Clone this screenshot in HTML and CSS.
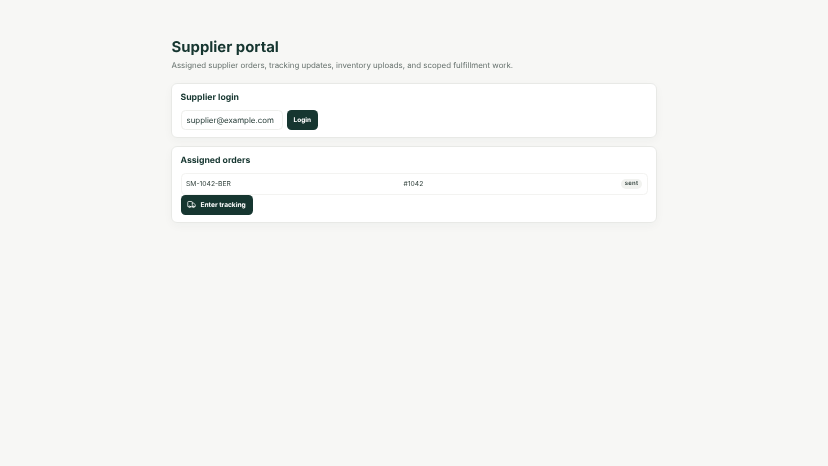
FILE: index.html
```html
<!DOCTYPE html>
<html lang="en">
<head>
<meta charset="utf-8">
<title>Supplier portal</title>
<link rel="stylesheet" href="styles.css">
</head>
<body>
<main class="page">
  <header class="head">
    <h1>Supplier portal</h1>
    <p>Assigned supplier orders, tracking updates, inventory uploads, and scoped fulfillment work.</p>
  </header>
  <section class="card">
    <h2>Supplier login</h2>
    <form class="login">
      <input class="field" type="text" value="supplier@example.com">
      <button class="btn" type="button">Login</button>
    </form>
  </section>
  <section class="card">
    <h2>Assigned orders</h2>
    <div class="row">
      <span>SM-1042-BER</span>
      <span>#1042</span>
      <span class="pill">sent</span>
    </div>
    <button class="btn btn-icon" type="button">
      <svg viewBox="0 0 24 24" width="9" height="9" fill="none" stroke="currentColor" stroke-width="2" stroke-linecap="round" stroke-linejoin="round"><path d="M14 18V6a2 2 0 0 0-2-2H4a2 2 0 0 0-2 2v11a1 1 0 0 0 1 1h2"/><path d="M15 18H9"/><path d="M19 18h2a1 1 0 0 0 1-1v-3.65a1 1 0 0 0-.22-.624l-3.48-4.35A1 1 0 0 0 17.52 8H14"/><circle cx="17" cy="18" r="2"/><circle cx="7" cy="18" r="2"/></svg>
      Enter tracking
    </button>
  </section>
</main>
</body>
</html>
```
FILE: styles.css
```css
* { box-sizing: border-box; }
html, body { margin: 0; height: 100%; }
body {
  background: #f7f7f5;
  color: #163630;
  font-family: Inter, "Liberation Sans", sans-serif;
  text-rendering: geometricPrecision;
}
.page {
  width: 486px;
  margin: 0 auto;
  padding-top: 38px;
  display: flex;
  flex-direction: column;
  gap: 8px;
  filter: blur(0.25px);
}
.head { margin-bottom: 3px; padding-left: 0.5px; }
h1 {
  margin: 0;
  font-size: 14.9px;
  line-height: 19px;
  font-weight: 700;
  color: #163630;
}
.head p {
  margin: 1px 0 0;
  font-size: 7.9px;
  line-height: 14px;
  color: #66716d;
}
.card {
  background: #fff;
  border: 1px solid #e8e9e6;
  border-radius: 6px;
  padding: 7.5px 8.5px;
  box-shadow: 0 3px 10px rgba(22, 54, 48, 0.035);
}
h2 {
  margin: 0 0 6px;
  font-size: 8.7px;
  line-height: 12px;
  font-weight: 700;
  color: #163630;
}
.login {
  display: flex;
  gap: 4px;
  align-items: stretch;
}
.field {
  width: 102.5px;
  height: 20px;
  padding: 0 5px;
  border: 1px solid #eeefec;
  border-radius: 4.5px;
  font: 400 7.9px Inter, sans-serif;
  color: #1f3631;
  background: #fff;
  text-rendering: geometricPrecision;
}
.btn {
  display: inline-flex;
  align-items: center;
  gap: 4px;
  height: 20px;
  padding: 0 6.5px;
  border: 0;
  border-radius: 4.5px;
  background: #163630;
  color: #fff;
  font: 700 6.5px Inter, sans-serif;
  white-space: nowrap;
  text-rendering: geometricPrecision;
}
.btn-icon { display: flex; width: 72.5px; gap: 5px; padding: 0 6px; font-size: 6.6px; }
.row {
  display: grid;
  grid-template-columns: 1fr 1fr auto;
  align-items: center;
  height: 22px;
  padding: 0 4.5px;
  border: 1px solid #f3f3f1;
  border-radius: 4.5px;
  font-size: 6.75px;
  color: #34443f;
}
.pill {
  padding: 1.5px 3.5px;
  border-radius: 999px;
  background: #f1f2ef;
  font-size: 6px;
  font-weight: 600;
  letter-spacing: 0.3px;
}
```
